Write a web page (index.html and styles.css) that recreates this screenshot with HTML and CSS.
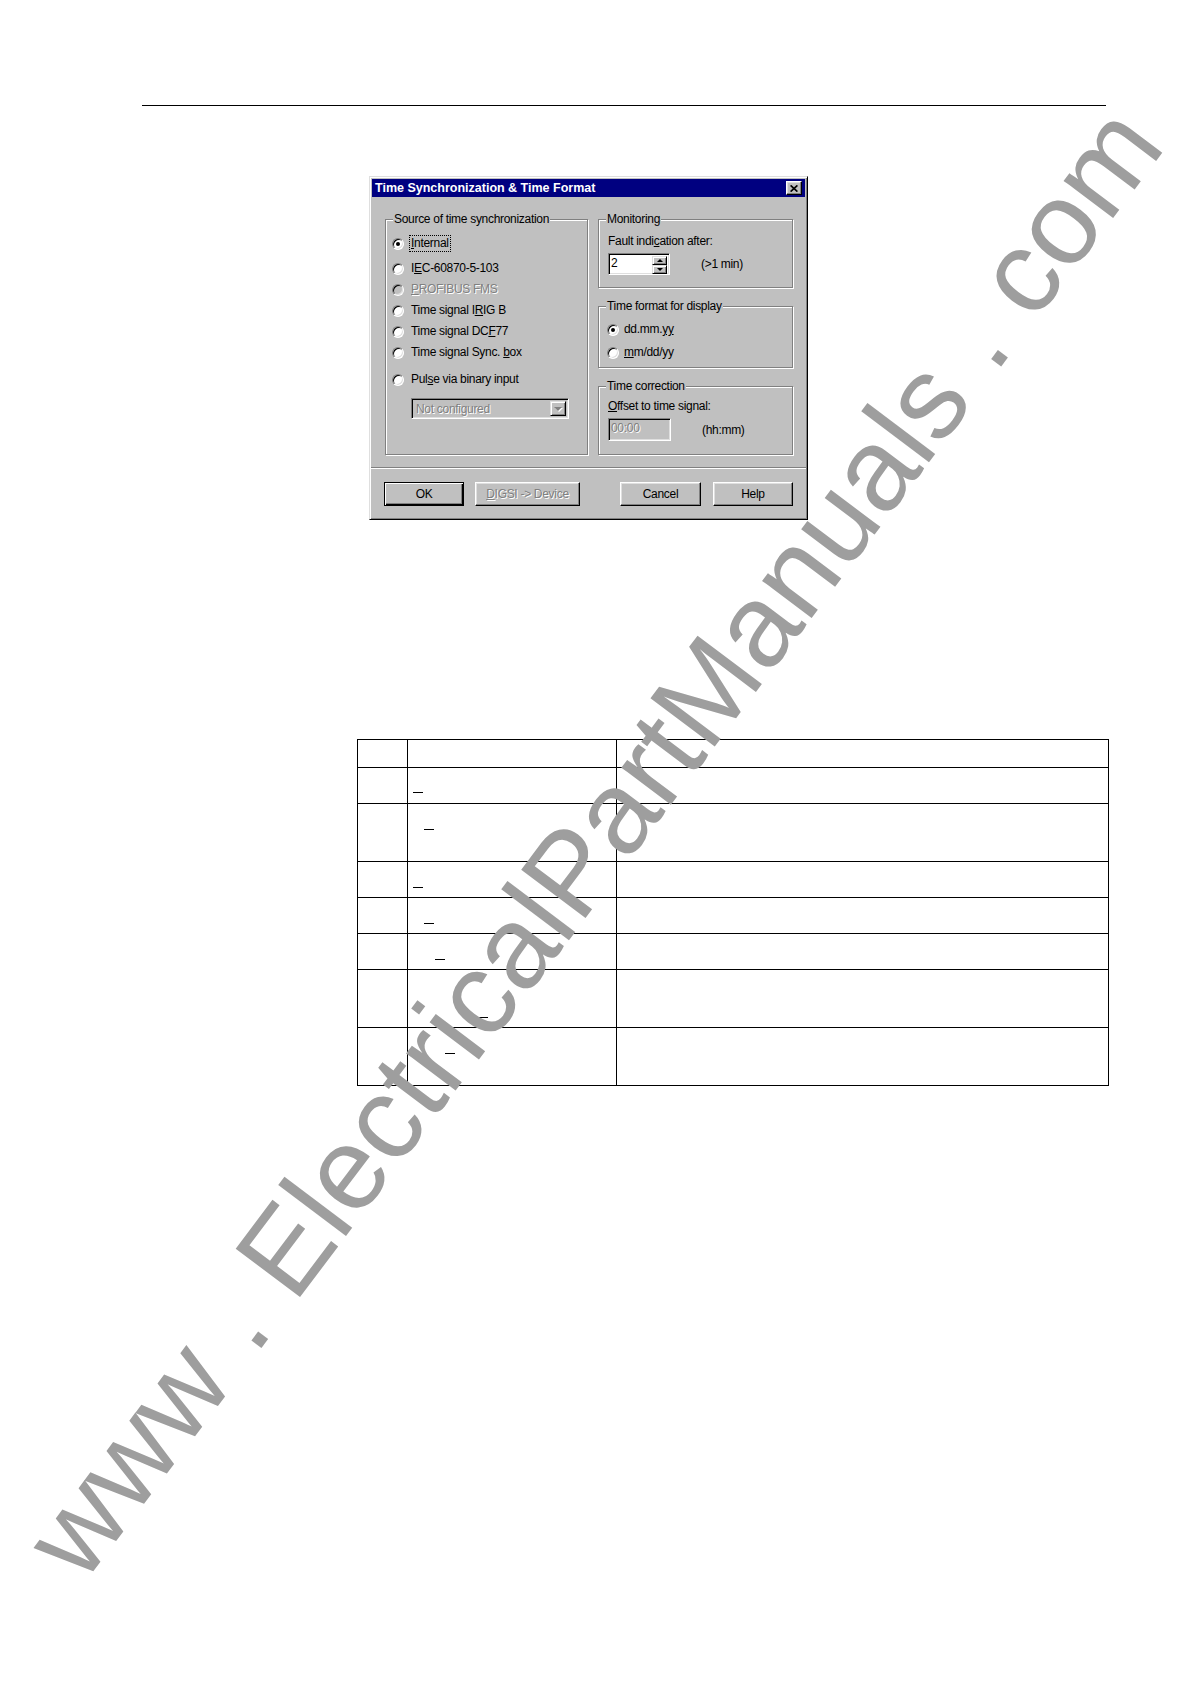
FILE: index.html
```html
<!DOCTYPE html>
<html lang="en">
<head>
<meta charset="utf-8">
<title>Time Synchronization &amp; Time Format</title>
<link rel="stylesheet" href="styles.css">
</head>
<body>
<div class="page">
  <div class="rule"></div>

  <div class="dialog">
    <div class="titlebar">
      <span class="title">Time Synchronization &amp; Time Format</span>
      <span class="close"><svg width="8" height="7" viewBox="0 0 8 7"><path d="M0.6 0.4L7.4 6.6M7.4 0.4L0.6 6.6" stroke="#000" stroke-width="1.7" fill="none"/></svg></span>
    </div>

    <div class="dbody">
      <div class="group g-source">
        <span class="legend">Source of time synchronization</span>
        <div class="opt"><span class="radio checked"></span><span class="lbl focus"><u>I</u>nternal</span></div>
        <div class="opt opt-second"><span class="radio"></span><span class="lbl">I<u>E</u>C-60870-5-103</span></div>
        <div class="opt"><span class="radio disabled"></span><span class="lbl dis"><u>P</u>ROFIBUS FMS</span></div>
        <div class="opt"><span class="radio"></span><span class="lbl">Time signal I<u>R</u>IG B</span></div>
        <div class="opt"><span class="radio"></span><span class="lbl">Time signal DC<u>F</u>77</span></div>
        <div class="opt"><span class="radio"></span><span class="lbl">Time signal Sync. <u>b</u>ox</span></div>
        <div class="opt opt-pulse"><span class="radio"></span><span class="lbl">Pul<u>s</u>e via binary input</span></div>
        <div class="combo">
          <span class="combo-text dis">Not configured</span>
          <span class="combo-btn"><span class="tri-down tri-dis"></span></span>
        </div>
      </div>

      <div class="rcol">
        <div class="group g-mon">
          <span class="legend">Monitoring</span>
          <div class="text">Fault indi<u>c</u>ation after:</div>
          <div class="field-row">
            <div class="edit spin">
              <span class="edit-val">2</span>
              <span class="spin-btns">
                <span class="spin-btn"><span class="tri-up"></span></span>
                <span class="spin-btn"><span class="tri-down tri-small"></span></span>
              </span>
            </div>
            <span class="unit">(&gt;1 min)</span>
          </div>
        </div>

        <div class="group g-fmt">
          <span class="legend">Time format for display</span>
          <div class="opt"><span class="radio checked"></span><span class="lbl">dd.mm.<u>yy</u></span></div>
          <div class="opt opt-next"><span class="radio"></span><span class="lbl"><u>m</u>m/dd/yy</span></div>
        </div>

        <div class="group g-cor">
          <span class="legend">Time correction</span>
          <div class="text"><u>O</u>ffset to time signal:</div>
          <div class="field-row">
            <div class="edit edit-dis"><span class="edit-val dis">00:00</span></div>
            <span class="unit">(hh:mm)</span>
          </div>
        </div>
      </div>
    </div>

    <div class="sep"></div>

    <div class="buttons">
      <span class="btn btn-default b-ok">OK</span>
      <span class="btn b-digsi"><span class="dis"><u>D</u>IGSI -&gt; Device</span></span>
      <span class="btn b-cancel">Cancel</span>
      <span class="btn b-help">Help</span>
    </div>
  </div>

  <table class="tbl">
    <colgroup><col class="c1"><col class="c2"><col class="c3"></colgroup>
    <tbody>
      <tr class="h28"><td></td><td></td><td></td></tr>
      <tr class="h36"><td></td><td><span class="u u-top ml5"></span></td><td></td></tr>
      <tr class="h58"><td></td><td><span class="u ml16"></span></td><td></td></tr>
      <tr class="h36"><td></td><td><span class="u ml5"></span></td><td></td></tr>
      <tr class="h36"><td></td><td><span class="u ml16"></span></td><td></td></tr>
      <tr class="h36"><td></td><td><span class="u ml27"></span></td><td></td></tr>
      <tr class="h58"><td></td><td><span class="u u-second ml70"></span></td><td></td></tr>
      <tr class="h58"><td></td><td><span class="u ml37"></span></td><td></td></tr>
    </tbody>
  </table>
</div>

<svg class="watermark" width="1190" height="1682" viewBox="0 0 1190 1682" aria-hidden="true">
  <text x="83" y="1585" transform="rotate(-53 83 1585)">www . ElectricalPartManuals . com</text>
</svg>
</body>
</html>
```

FILE: styles.css
```css
* { box-sizing: border-box; }

html, body {
  margin: 0;
  padding: 0;
  background: #fff;
}

body {
  position: relative;
  width: 1190px;
  min-height: 1682px;
  font-family: "Liberation Sans", Arial, sans-serif;
  color: #000;
}

.page {
  padding: 105px 0 0 142px;
}

.rule {
  width: 964px;
  height: 1px;
  background: #000;
}

/* ---------- dialog ---------- */
.dialog {
  margin: 70px 0 0 227px;
  width: 439px;
  height: 344px;
  padding: 2px;
  display: flex;
  flex-direction: column;
  background: #c0c0c0;
  border: 1px solid;
  border-color: #dfdfdf #000 #000 #dfdfdf;
  box-shadow: inset 1px 1px 0 #fff, inset -1px -1px 0 #808080;
  font-family: "Liberation Sans", Arial, sans-serif;
  font-size: 12px;
  letter-spacing: -0.3px;
  color: #000;
}

.titlebar {
  height: 18px;
  padding: 0 3px 0 3px;
  display: flex;
  align-items: center;
  justify-content: space-between;
  background: #000080;
}

.title {
  font-family: "Liberation Sans", Arial, sans-serif;
  font-weight: bold;
  font-size: 12.5px;
  letter-spacing: 0;
  color: #fff;
  white-space: nowrap;
}

.close {
  width: 16px;
  height: 14px;
  display: flex;
  align-items: center;
  justify-content: center;
  background: #c0c0c0;
  border: 1px solid;
  border-color: #fff #000 #000 #fff;
  box-shadow: inset -1px -1px 0 #808080, inset 1px 1px 0 #dfdfdf;
}

.dbody {
  display: flex;
  gap: 10px;
  padding: 22px 0 0 13px;
}

.group {
  position: relative;
  border: 1px solid #808080;
  box-shadow: inset 1px 1px 0 #fff, 1px 1px 0 #fff;
}

.legend {
  position: absolute;
  top: -9px;
  left: 7px;
  padding: 0 1px;
  line-height: 16px;
  background: #c0c0c0;
  white-space: nowrap;
}

.g-source {
  width: 203px;
  height: 236px;
  padding: 13px 0 0 6px;
  display: flex;
  flex-direction: column;
}

.rcol {
  width: 195px;
  display: flex;
  flex-direction: column;
  gap: 18px;
}

.g-mon { height: 69px; padding: 13px 0 0 9px; }
.g-fmt { height: 62px; padding: 12px 0 0 8px; }
.g-cor { height: 69px; padding: 11px 0 0 9px; }

.opt {
  display: flex;
  align-items: center;
  height: 21px;
}

.opt-second { margin-top: 4px; }
.opt-pulse { margin-top: 6px; }
.opt-next { margin-top: 2px; }

.radio {
  position: relative;
  flex: none;
  width: 12px;
  height: 12px;
  border-radius: 50%;
  background: #fff;
  border: 1px solid;
  border-color: #808080 #fff #fff #808080;
  box-shadow: inset 1px 1px 0 #000, inset -1px -1px 0 #dfdfdf;
}

.radio.checked::after {
  content: "";
  position: absolute;
  left: 3px;
  top: 3px;
  width: 4px;
  height: 4px;
  border-radius: 50%;
  background: #000;
}

.radio.disabled { background: #c0c0c0; }

.lbl {
  margin-left: 6px;
  padding: 0 1px;
  line-height: 15px;
  white-space: nowrap;
}

.g-fmt .lbl { margin-left: 4px; }

.focus { outline: 1px dotted #000; }

.dis {
  color: #808080;
  text-shadow: 1px 1px 0 #fff;
}

.text {
  line-height: 16px;
  white-space: nowrap;
}

.field-row {
  display: flex;
  align-items: center;
  margin-top: 4px;
}

.edit {
  display: flex;
  align-items: flex-start;
  width: 63px;
  height: 23px;
  padding: 2px;
  background: #fff;
  border: 1px solid;
  border-color: #808080 #fff #fff #808080;
  box-shadow: inset 1px 1px 0 #000, inset -1px -1px 0 #dfdfdf;
}

.edit-val {
  flex: 1;
  line-height: 15px;
}

.edit-dis { background: #c0c0c0; }

.spin {
  width: 62px;
  height: 22px;
}

.spin-btns {
  display: flex;
  flex-direction: column;
  width: 15px;
  height: 18px;
}

.spin-btn {
  flex: 1;
  display: flex;
  align-items: center;
  justify-content: center;
  background: #c0c0c0;
  border: 1px solid;
  border-color: #dfdfdf #000 #000 #dfdfdf;
  box-shadow: inset 1px 1px 0 #fff, inset -1px -1px 0 #808080;
}

.tri-up {
  width: 0;
  height: 0;
  border-left: 3px solid transparent;
  border-right: 3px solid transparent;
  border-bottom: 3px solid #000;
}

.tri-down {
  width: 0;
  height: 0;
  border-left: 4px solid transparent;
  border-right: 4px solid transparent;
  border-top: 4px solid #000;
}

.tri-small {
  border-left-width: 3px;
  border-right-width: 3px;
  border-top-width: 3px;
}

.tri-dis {
  border-top-color: #808080;
  filter: drop-shadow(1px 1px 0 #fff);
}

.unit {
  margin-left: 31px;
  white-space: nowrap;
}

.combo {
  display: flex;
  align-items: stretch;
  width: 158px;
  height: 21px;
  margin: 8px 0 0 19px;
  padding: 2px;
  background: #c0c0c0;
  border: 1px solid;
  border-color: #808080 #fff #fff #808080;
  box-shadow: inset 1px 1px 0 #000, inset -1px -1px 0 #dfdfdf;
}

.combo-text {
  flex: 1;
  padding-left: 2px;
  line-height: 17px;
  white-space: nowrap;
}

.combo-btn {
  width: 16px;
  display: flex;
  align-items: center;
  justify-content: center;
  background: #c0c0c0;
  border: 1px solid;
  border-color: #dfdfdf #000 #000 #dfdfdf;
  box-shadow: inset 1px 1px 0 #fff, inset -1px -1px 0 #808080;
}

.sep {
  margin: 12px -1px 0;
  border-top: 1px solid #808080;
  border-bottom: 1px solid #fff;
}

.buttons {
  display: flex;
  margin-top: 13px;
  padding-left: 12px;
}

.btn {
  height: 24px;
  display: flex;
  align-items: center;
  justify-content: center;
  white-space: nowrap;
  background: #c0c0c0;
  border: 1px solid;
  border-color: #fff #000 #000 #fff;
  box-shadow: inset -1px -1px 0 #808080, inset 1px 1px 0 #dfdfdf;
}

.btn-default {
  border-color: #000;
  box-shadow: inset 1px 1px 0 #fff, inset -1px -1px 0 #000, inset -2px -2px 0 #808080;
}

.b-ok { width: 80px; }
.b-digsi { width: 105px; margin-left: 11px; }
.b-cancel { width: 81px; margin-left: 40px; }
.b-help { width: 80px; margin-left: 12px; }

/* ---------- table ---------- */
.tbl {
  margin: 219px 0 0 215px;
  width: 752px;
  table-layout: fixed;
  border-collapse: collapse;
}

.c1 { width: 50px; }
.c2 { width: 209px; }

.tbl td {
  border: 1px solid #000;
  padding: 0;
  vertical-align: top;
}

.h28 td { height: 28px; }
.h36 td { height: 36px; }
.h58 td { height: 58px; }

.u {
  display: block;
  width: 10px;
  height: 26px;
  border-bottom: 1px solid #000;
}

.u-top { height: 25px; }
.u-second { height: 48px; }

.ml5 { margin-left: 5px; }
.ml16 { margin-left: 16px; }
.ml27 { margin-left: 27px; }
.ml37 { margin-left: 37px; }
.ml70 { margin-left: 70px; }

/* ---------- watermark ---------- */
.watermark {
  position: absolute;
  left: 0;
  top: 0;
  pointer-events: none;
}

.watermark text {
  font-family: "Liberation Sans", Arial, sans-serif;
  font-size: 117px;
  fill: #9e9e9e;
}
```
